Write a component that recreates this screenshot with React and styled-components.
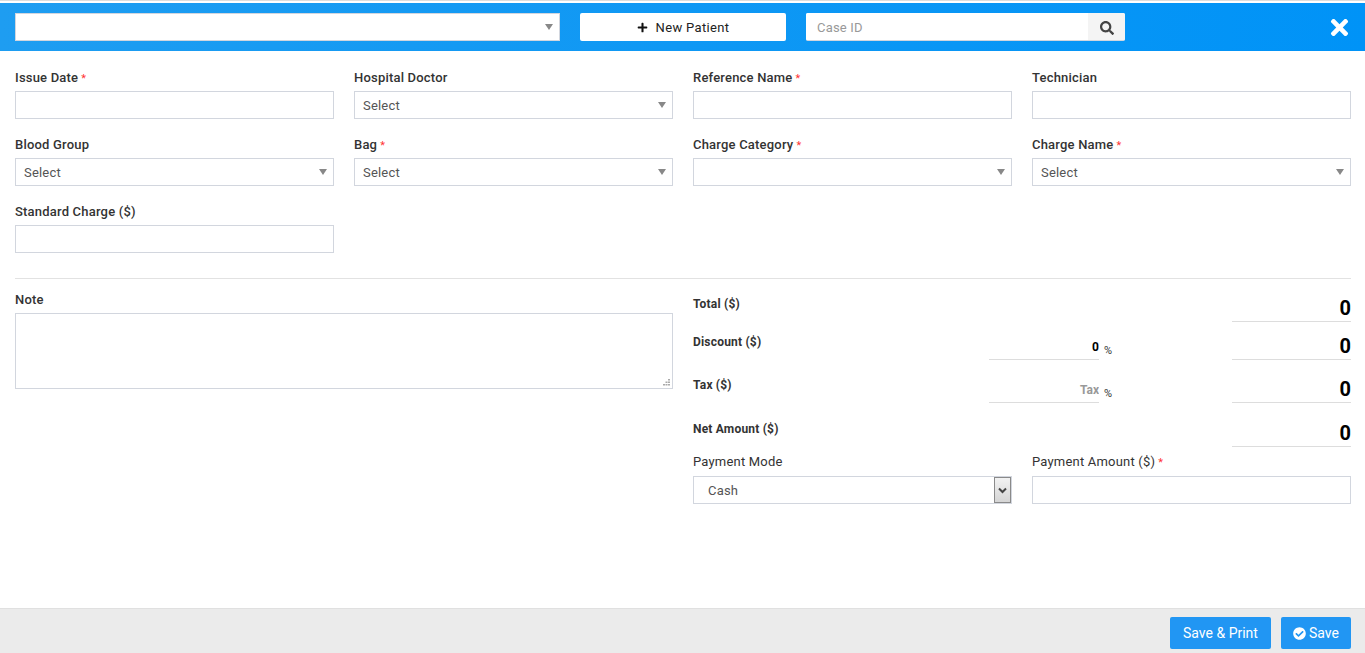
import React from 'react';
import styled, { createGlobalStyle } from 'styled-components';
import { FaPlus, FaSearch, FaTimes, FaCheckCircle } from 'react-icons/fa';

const GlobalStyle = createGlobalStyle`
  html, body {
    margin: 0;
    padding: 0;
    background: #fff;
  }
  body {
    font-family: Roboto, "Liberation Sans", sans-serif;
    font-size: 13px;
    color: #333;
  }
  * { box-sizing: border-box; }
`;

const Page = styled.div`
  width: 1365px;
  height: 653px;
  padding-top: 3px;
  display: flex;
  flex-direction: column;
  border-top: 1px solid #ddd;
  overflow: hidden;
`;

const Header = styled.header`
  height: 48px;
  margin-top: -1px;
  flex: none;
  display: flex;
  align-items: center;
  padding: 0 15px;
  background: linear-gradient(to right, #1e9df1, #0093f7);
`;

const Select2 = styled.div`
  height: 28px;
  width: ${p => p.$width || '100%'};
  flex: none;
  display: flex;
  align-items: center;
  justify-content: space-between;
  padding: 0 6px 0 8px;
  background: #fff;
  border: 1px solid #d2d6de;
  color: #555;
  font-size: 13px;
  letter-spacing: 0.2px;
`;

const Caret = styled.span`
  width: 0;
  height: 0;
  border-left: 4.5px solid transparent;
  border-right: 4.5px solid transparent;
  border-top: 6px solid #888;
`;

const NewPatient = styled.button`
  width: 206px;
  height: 28px;
  margin-left: 20px;
  flex: none;
  display: flex;
  align-items: center;
  justify-content: center;
  gap: 8px;
  background: #fff;
  border: 0;
  border-radius: 2px;
  color: #222;
  font: 400 13px Roboto, sans-serif;
  letter-spacing: 0.35px;
  svg { font-size: 11px; color: #111; }
`;

const CaseSearch = styled.div`
  width: 319px;
  height: 28px;
  margin-left: 20px;
  flex: none;
  display: flex;
  background: #fff;
  border-radius: 2px;
  border-bottom: 1px solid #d2d6de;
  overflow: hidden;
`;

const CaseInput = styled.input`
  flex: 1;
  min-width: 0;
  border: 0;
  outline: 0;
  padding: 1px 11px 0;
  font: 13px Roboto, sans-serif;
  letter-spacing: 0.2px;
  &::placeholder { color: #999; opacity: 1; }
`;

const SearchAddon = styled.span`
  width: 37px;
  padding-top: 2px;
  display: flex;
  align-items: center;
  justify-content: center;
  background: #f4f4f4;
  color: #444;
  font-size: 14px;
`;

const CloseBtn = styled.span`
  margin-left: auto;
  margin-right: -2px;
  padding-top: 1px;
  display: flex;
  color: #fff;
  font-size: 25px;
`;

const Body = styled.main`
  flex: 1;
  padding: 18px 14px 0 15px;
`;

const FieldGrid = styled.div`
  display: grid;
  grid-template-columns: repeat(4, 319px);
  column-gap: 20px;
  row-gap: 17px;
`;

const Field = styled.div`
  min-width: 0;
`;

const Label = styled.label`
  display: block;
  height: 22px;
  line-height: 18px;
  font-weight: 500;
  font-size: 13px;
  color: #333;
  letter-spacing: 0.2px;
`;

const Required = styled.span`
  color: #f33;
  margin-left: 3px;
  font-weight: 400;
  font-size: 11px;
`;

const TextInput = styled.input`
  display: block;
  width: 100%;
  height: 28px;
  border: 1px solid #d2d6de;
  outline: 0;
  padding: 0 8px;
  background: #fff;
`;

const Divider = styled.hr`
  margin: 25px 0 12px;
  border: 0;
  border-top: 1px solid #e2e2e2;
`;

const Lower = styled.div`
  display: grid;
  grid-template-columns: 658px 658px;
  column-gap: 20px;
`;

const NoteWrap = styled.div`
  position: relative;
  height: 76px;
`;

const NoteBox = styled.textarea`
  display: block;
  width: 100%;
  height: 76px;
  border: 1px solid #d2d6de;
  outline: 0;
  padding: 6px 8px;
  resize: none;
  background: #fff;
`;

// resize grip sits on top of the textarea corner
const NoteGrip = styled.svg`
  position: absolute;
  right: 3px;
  bottom: 3px;
  width: 7px;
  height: 7px;
  fill: #aaa;
`;

const Totals = styled.div`
  padding-top: 5px;
`;

const TotalRow = styled.div`
  display: grid;
  grid-template-columns: 296px 110px 133px 119px;
  height: 26px;
  margin-top: ${p => p.$gap || 0}px;
`;

const RowLabel = styled.div`
  font-weight: 700;
  font-size: 12px;
  line-height: 16px;
  color: #333;
  letter-spacing: 0.2px;
`;

const PercentCell = styled.div`
  display: flex;
  align-items: flex-end;
`;

const SmallInput = styled.input`
  width: 110px;
  height: 26px;
  flex: none;
  border: 0;
  border-bottom: 1px solid #ddd;
  outline: 0;
  padding: 0;
  text-align: right;
  font: 700 12px Roboto, sans-serif;
  color: #000;
  background: transparent;
  &::placeholder { color: #999; opacity: 1; }
`;

const Percent = styled.span`
  font-size: 11px;
  margin-left: 5px;
  margin-bottom: 3px;
  line-height: 13px;
  color: #333;
`;

const AmountInput = styled.input`
  grid-column: 4;
  width: 119px;
  height: 26px;
  border: 0;
  border-bottom: 1px solid #ddd;
  outline: 0;
  padding: 0 0 2px;
  text-align: right;
  font: 700 20px Roboto, sans-serif;
  color: #000;
  background: transparent;
`;

const PaymentGrid = styled.div`
  display: grid;
  grid-template-columns: 319px 319px;
  column-gap: 20px;
  margin-top: 6px;
`;

const PaymentLabel = styled(Label)`
  font-weight: 400;
  height: 23px;
`;

const NativeSelect = styled.div`
  height: 28px;
  display: flex;
  align-items: center;
  justify-content: space-between;
  padding: 0 0 0 14px;
  border: 1px solid #d2d6de;
  font-size: 13px;
  color: #555;
  letter-spacing: 0.2px;
`;

const SelectArrow = styled.span`
  width: 17px;
  height: 26px;
  display: flex;
  align-items: center;
  justify-content: center;
  background: linear-gradient(to bottom, #f2f2f2, #d5d5d5);
  border: 1px solid #8a8a8a;
  svg { width: 9px; height: 7px; }
`;

const Footer = styled.footer`
  height: 45px;
  flex: none;
  display: flex;
  justify-content: flex-end;
  gap: 10px;
  padding: 8px 14px 0 0;
  background: #ebebeb;
  border-top: 1px solid #e0e0e0;
`;

const ActionButton = styled.button`
  height: 32px;
  width: ${p => p.$width}px;
  display: flex;
  align-items: center;
  justify-content: center;
  gap: 3px;
  border: 0;
  border-radius: 2px;
  background: #2196f3;
  color: #fff;
  font: 14px Roboto, sans-serif;
  svg { font-size: 13px; }
`;

const topFields = [
  { label: 'Issue Date', required: true },
  { label: 'Hospital Doctor', select: 'Select' },
  { label: 'Reference Name', required: true },
  { label: 'Technician' },
  { label: 'Blood Group', select: 'Select' },
  { label: 'Bag', required: true, select: 'Select' },
  { label: 'Charge Category', required: true, select: '' },
  { label: 'Charge Name', required: true, select: 'Select' },
  { label: 'Standard Charge ($)' },
];

function FormField({ label, required, select }) {
  return (
    <Field>
      <Label>
        {label}
        {required && <Required>*</Required>}
      </Label>
      {select !== undefined ? (
        <Select2>
          <span>{select}</span>
          <Caret />
        </Select2>
      ) : (
        <TextInput />
      )}
    </Field>
  );
}

export default function App() {
  return (
    <>
      <GlobalStyle />
      <Page>
        <Header>
          <Select2 $width="545px">
            <span />
            <Caret />
          </Select2>
          <NewPatient>
            <FaPlus />
            New Patient
          </NewPatient>
          <CaseSearch>
            <CaseInput placeholder="Case ID" />
            <SearchAddon>
              <FaSearch />
            </SearchAddon>
          </CaseSearch>
          <CloseBtn>
            <FaTimes />
          </CloseBtn>
        </Header>
        <Body>
          <FieldGrid>
            {topFields.map(f => (
              <FormField key={f.label} {...f} />
            ))}
          </FieldGrid>
          <Divider />
          <Lower>
            <Field>
              <Label>Note</Label>
              <NoteWrap>
                <NoteBox />
                <NoteGrip viewBox="0 0 7 7">
                  <rect x="5" y="0" width="2" height="1.5" />
                  <rect x="2.5" y="2.5" width="2" height="1.5" />
                  <rect x="5" y="2.5" width="2" height="1.5" />
                  <rect x="0" y="5" width="2" height="1.5" />
                  <rect x="2.5" y="5" width="2" height="1.5" />
                  <rect x="5" y="5" width="2" height="1.5" />
                </NoteGrip>
              </NoteWrap>
            </Field>
            <div>
              <Totals>
                <TotalRow>
                  <RowLabel>Total ($)</RowLabel>
                  <AmountInput defaultValue="0" />
                </TotalRow>
                <TotalRow $gap={12}>
                  <RowLabel>Discount ($)</RowLabel>
                  <PercentCell>
                    <SmallInput defaultValue="0" />
                    <Percent>%</Percent>
                  </PercentCell>
                  <AmountInput defaultValue="0" />
                </TotalRow>
                <TotalRow $gap={17}>
                  <RowLabel>Tax ($)</RowLabel>
                  <PercentCell>
                    <SmallInput placeholder="Tax" />
                    <Percent>%</Percent>
                  </PercentCell>
                  <AmountInput defaultValue="0" />
                </TotalRow>
                <TotalRow $gap={18}>
                  <RowLabel>Net Amount ($)</RowLabel>
                  <AmountInput defaultValue="0" />
                </TotalRow>
              </Totals>
              <PaymentGrid>
                <div>
                  <PaymentLabel>Payment Mode</PaymentLabel>
                  <NativeSelect>
                    Cash
                    <SelectArrow>
                      <svg viewBox="0 0 9 7">
                        <path d="M1 1.5 L4.5 5 L8 1.5" fill="none" stroke="#444" strokeWidth="2" />
                      </svg>
                    </SelectArrow>
                  </NativeSelect>
                </div>
                <div>
                  <PaymentLabel>
                    Payment Amount ($)
                    <Required>*</Required>
                  </PaymentLabel>
                  <TextInput />
                </div>
              </PaymentGrid>
            </div>
          </Lower>
        </Body>
        <Footer>
          <ActionButton $width={101}>Save &amp; Print</ActionButton>
          <ActionButton $width={70}>
            <FaCheckCircle />
            Save
          </ActionButton>
        </Footer>
      </Page>
    </>
  );
}
